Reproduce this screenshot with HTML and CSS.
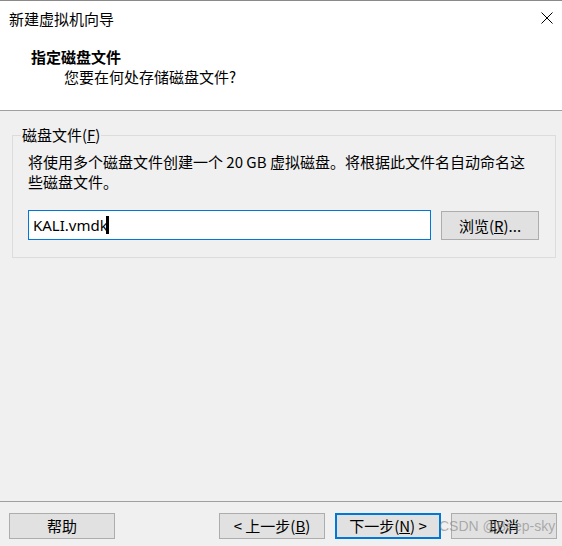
FILE: index.html
```html
<!DOCTYPE html>
<html lang="zh-CN">
<head>
    <meta charset="UTF-8">
    <title>新建虚拟机向导</title>
    <link rel="stylesheet" href="styles.css">
</head>
<body>

<div class="titlebar">
    <span class="title">新建虚拟机向导</span>
    <svg class="close" width="12" height="12" viewBox="0 0 12 12">
        <path d="M0.5 0.5 L11.5 11.5 M11.5 0.5 L0.5 11.5" stroke="#000" stroke-width="1" fill="none"/>
    </svg>
</div>

<div class="header">
    <h1>指定磁盘文件</h1>
    <p class="sub">您要在何处存储磁盘文件?</p>
</div>

<div class="content">
    <fieldset class="group">
        <legend>磁盘文件(<u>F</u>)</legend>
        <p class="desc">将使用多个磁盘文件创建一个 20 GB 虚拟磁盘。将根据此文件名自动命名这些磁盘文件。</p>
        <div class="file-row">
            <div class="file-input">KALI.vmdk<span class="caret"></span></div>
            <button class="btn browse">浏览(<u>R</u>)...</button>
        </div>
    </fieldset>
</div>

<div class="footer">
    <button class="btn help">帮助</button>
    <button class="btn">&lt; 上一步(<u>B</u>)</button>
    <button class="btn default">下一步(<u>N</u>) &gt;</button>
    <button class="btn">取消</button>
    <span class="watermark">CSDN @Beep-sky</span>
</div>

</body>
</html>
```

FILE: styles.css
```css
body {
    margin: 0;
    height: 546px;
    display: flex;
    flex-direction: column;
    background-color: #f0f0f0;
    font-family: "Noto Sans CJK SC", "Noto Sans", sans-serif;
    font-size: 15px;
    color: #000;
    overflow: hidden;
}

.titlebar {
    background-color: #fff;
    border-top: 1px solid #8a8a8a;
    height: 36px;
    display: flex;
    align-items: center;
    justify-content: space-between;
    padding: 0 9px 0 9px;
}

.title {
    line-height: 20px;
}

.close {
    margin-top: -2px;
}

.header {
    background-color: #fff;
    height: 73px;
    border-bottom: 1px solid #a0a0a0;
    padding-left: 31px;
}

.header h1 {
    margin: 10px 0 0 0;
    font-size: 15px;
    font-weight: bold;
    line-height: 20px;
}

.header .sub {
    margin: 0;
    padding-left: 33px;
    line-height: 20px;
}

.content {
    flex: 1;
    padding: 14px 6px 0 12px;
}

.group {
    margin: 0;
    border: 1px solid #dcdcdc;
    padding: 0 15px 17px 15px;
}

.group legend {
    margin-left: -7px;
    padding: 0 1px;
    line-height: 20px;
}

.desc {
    margin: 7px 0 0 0;
    max-width: 505px;
    line-height: 20px;
}

.file-row {
    display: flex;
    align-items: flex-end;
    gap: 10px;
    margin-top: 18px;
}

.file-input {
    box-sizing: border-box;
    width: 403px;
    height: 30px;
    background-color: #fff;
    border: 1px solid #0078d7;
    padding-left: 4px;
    display: flex;
    align-items: center;
    font-family: "Noto Sans", sans-serif;
}

.caret {
    display: inline-block;
    width: 3px;
    height: 18px;
    background-color: #000;
    margin-left: -2px;
}

.btn {
    box-sizing: border-box;
    width: 106px;
    height: 26px;
    background-color: #e1e1e1;
    border: 1px solid #adadad;
    padding: 0;
    font-family: "Noto Sans CJK SC", "Noto Sans", sans-serif;
    font-size: 15px;
    line-height: 20px;
    color: #000;
}

.browse {
    width: 98px;
    height: 29px;
}

.footer {
    position: relative;
    border-top: 1px solid #a0a0a0;
    padding: 11px 5px 7px 9px;
    display: flex;
    gap: 10px;
}

.help {
    margin-right: 94px;
}

.default {
    border: 2px solid #0078d7;
}

.watermark {
    position: absolute;
    left: 439px;
    top: 16px;
    font-family: "Liberation Sans", Arial, sans-serif;
    font-size: 14px;
    color: rgba(130, 130, 130, 0.6);
    pointer-events: none;
}
```
